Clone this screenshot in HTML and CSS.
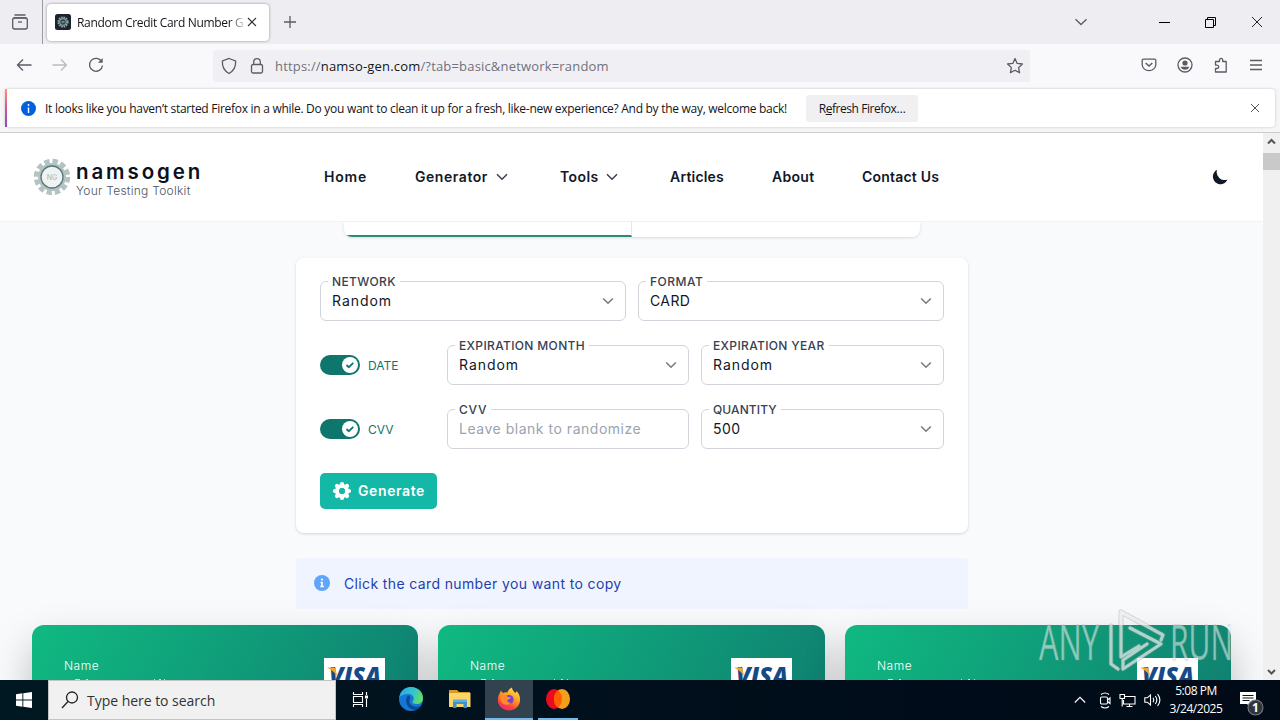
FILE: index.html
```html
<!DOCTYPE html>
<html lang="en">
<head>
<meta charset="utf-8">
<title>Random Credit Card Number Generator</title>
<link rel="stylesheet" href="styles.css">
</head>
<body>
<div class="desktop">
  <div class="titlebar">
    <div class="firefox-view"><svg width="18" height="18" viewBox="0 0 18 18" class="line"><path d="M3.5 2h11M2.5 4.8h13"/><rect x="1.7" y="5" width="14.6" height="11" rx="2"/><path d="M7 9h4"/></svg></div>
    <div class="tab">
      <svg width="16" height="16" viewBox="0 0 16 16"><rect width="16" height="16" rx="2.5" fill="#18242f"/><circle cx="8" cy="8" r="4.6" fill="none" stroke="#92a5a9" stroke-width="2" stroke-dasharray="1.6 .8"/><circle cx="8" cy="8" r="3.4" fill="#33454e" stroke="#b4c2c4" stroke-width=".8"/><path d="M6.5 8h3" stroke="#a9b9bc"/></svg>
      <span class="tab-title">Random Credit Card Number Ge</span>
      <svg class="tab-close" width="10" height="10" viewBox="0 0 10 10"><path d="M1 1l8 8M9 1L1 9" stroke="#333" stroke-width="1.1"/></svg>
    </div>
    <svg class="new-tab line" width="14" height="14" viewBox="0 0 14 14"><path d="M7 1v12M1 7h12"/></svg>
    <div class="window-buttons">
      <svg width="14" height="8" viewBox="0 0 14 8" class="line"><path d="M1.5 1.2L7 6.5l5.500-5.300"/></svg>
      <svg width="11" height="11" viewBox="0 0 11 11" stroke="#000" fill="none"><path d="M0 5.500h11"/></svg>
      <svg width="11" height="11" viewBox="0 0 11 11" stroke="#000" fill="none"><path d="M.5 2.500h8v8h-8zM2.500 2.500v-2h8v8h-2"/></svg>
      <svg width="12" height="12" viewBox="0 0 12 12" stroke="#222" fill="none"><path d="M1 1l10 10M11 1L1 11"/></svg>
    </div>
  </div>

  <div class="toolbar">
    <div class="history">
      <svg width="16" height="16" viewBox="0 0 16 16" class="line"><path d="M7 2.500L1.500 8 7 13.500M1.500 8h14"/></svg>
      <svg width="16" height="16" viewBox="0 0 16 16" class="line faded"><path d="M9 2.500L14.500 8 9 13.500M14.500 8H.5"/></svg>
      <svg width="16" height="16" viewBox="0 0 16 16" class="line"><path d="M13.700 4.600A6.500 6.500 0 1 0 14.500 8.500"/><path d="M14.700 1v4.800H9.900z" fill="#5b5b66" stroke="none"/></svg>
    </div>
    <div class="urlbar">
      <svg width="16" height="18" viewBox="0 0 16 18" class="line"><path d="M8 1.500L14.600 4c.4 5.500-1.600 9.600-6.600 12.500C3 13.600 1 9.500 1.400 4z"/></svg>
      <svg width="14" height="18" viewBox="0 0 14 18" class="line"><rect x="1.500" y="7.500" width="11" height="8.500" rx="1.500"/><path d="M3.700 7.500V5a3.300 3.300 0 0 1 6.600 0v2.500"/></svg>
      <span class="url">https://<b>namso-gen.com</b>/?tab=basic&amp;network=random</span>
      <svg width="18" height="18" viewBox="0 0 18 18" class="line"><path d="M9 1.600l2.200 4.800 5.200.6-3.800 3.600 1 5.200L9 13.200l-4.600 2.600 1-5.200L1.600 7l5.200-.6z" stroke-linejoin="round"/></svg>
    </div>
    <div class="tools">
      <svg width="16" height="16" viewBox="0 0 16 16" class="line"><path d="M2.500 2.200h11q1.300 0 1.300 1.300V7.500a6.800 6.200 0 0 1-13.600 0v-4q0-1.300 1.300-1.300z"/><path d="M4.700 6L8 9l3.300-3" stroke-width="1.500"/></svg>
      <svg width="16" height="16" viewBox="0 0 16 16" class="line"><circle cx="8" cy="8" r="7"/><circle cx="8" cy="6" r="2.600" fill="#5b5b66" stroke="none"/><path d="M3.700 9.700h8.600q-1 3-4.300 3t-4.300-3z" fill="#5b5b66" stroke="none"/></svg>
      <svg width="16" height="16" viewBox="0 0 16 16" class="line"><path d="M2.500 4.500h4V3a1.600 1.600 0 0 1 3.200 0v1.500h3.500v10.500H2.500v-3.500H4a1.700 1.700 0 0 0 0-3.400H2.500z" stroke-linejoin="round"/></svg>
      <svg width="14" height="16" viewBox="0 0 14 16" class="line"><path d="M1 3.500h12M1 8h12M1 12.500h12"/></svg>
    </div>
  </div>

  <div class="notice-area">
    <div class="notice">
      <svg width="15" height="15" viewBox="0 0 15 15"><circle cx="7.500" cy="7.500" r="7.500" fill="#0060df"/><path d="M7.500 3v2M7.500 6.500V12" stroke="#fff" stroke-width="1.400"/></svg>
      <span class="notice-text">It looks like you haven’t started Firefox in a while. Do you want to clean it up for a fresh, like-new experience? And by the way, welcome back!</span>
      <button class="refresh"><span>R<u>e</u>fresh Firefox…</span></button>
      <svg class="notice-close" width="10" height="10" viewBox="0 0 10 10"><path d="M1 1l8 8M9 1L1 9" stroke="#555" stroke-width="1"/></svg>
    </div>
  </div>

  <div class="viewport">
    <div class="page">
      <header class="site-header">
        <div class="brand">
          <svg width="38" height="38" viewBox="-19 -19 38 38">
            <circle r="15.800" fill="none" stroke="#b3c2c2" stroke-width="4.800" stroke-dasharray="5.300 2.973"/>
            <circle r="12.500" fill="#c5d0d0" stroke="#b3c2c2" stroke-width="3"/>
            <circle r="11" fill="#f0f3f3" stroke="#5c7779" stroke-width="1.300"/>
            <text class="logo-initials" y="2.500" text-anchor="middle">NG</text>
          </svg>
          <div class="brand-text"><strong>namsogen</strong><span>Your Testing Toolkit</span></div>
        </div>
        <nav class="nav">
          <a class="home">Home</a>
          <a class="generator">Generator<svg width="12" height="8" viewBox="0 0 12 8"><path d="M1 1.200l5 5 5-5"/></svg></a>
          <a class="toolkit">Tools<svg width="12" height="8" viewBox="0 0 12 8"><path d="M1 1.200l5 5 5-5"/></svg></a>
          <a class="articles">Articles</a>
          <a class="about">About</a>
          <a class="contact">Contact Us</a>
        </nav>
        <svg class="moon" width="16" height="16" viewBox="0 0 16 16"><path d="M5 .8A7.600 7.600 0 1 0 15.500 10.500 8 8 0 0 1 5 .8z" fill="#111827"/></svg>
      </header>

      <main class="content">
        <div class="tabs"><div class="tabs-active"></div></div>
        <form class="panel">
          <div class="row two">
            <div class="field"><label>NETWORK</label><span>Random</span><svg class="chev" width="12" height="8" viewBox="0 0 12 8"><path d="M1.200 1.500L6 6.200l4.800-4.700"/></svg></div>
            <div class="field"><label class="w-format">FORMAT</label><span class="v-card">CARD</span><svg class="chev" width="12" height="8" viewBox="0 0 12 8"><path d="M1.200 1.500L6 6.200l4.800-4.700"/></svg></div>
          </div>
          <div class="row three">
            <div class="switch"><i><svg width="10" height="10" viewBox="0 0 10 10"><path d="M1.500 5l2.300 2.200 4.500-4.400"/></svg></i><span>DATE</span></div>
            <div class="field"><label>EXPIRATION MONTH</label><span>Random</span><svg class="chev" width="12" height="8" viewBox="0 0 12 8"><path d="M1.200 1.500L6 6.200l4.800-4.700"/></svg></div>
            <div class="field"><label>EXPIRATION YEAR</label><span>Random</span><svg class="chev" width="12" height="8" viewBox="0 0 12 8"><path d="M1.200 1.500L6 6.200l4.800-4.700"/></svg></div>
          </div>
          <div class="row three">
            <div class="switch"><i><svg width="10" height="10" viewBox="0 0 10 10"><path d="M1.500 5l2.300 2.200 4.500-4.400"/></svg></i><span>CVV</span></div>
            <div class="field"><label class="w-cvv">CVV</label><span class="placeholder">Leave blank to randomize</span></div>
            <div class="field"><label class="w-qty">QUANTITY</label><span class="v-card">500</span><svg class="chev" width="12" height="8" viewBox="0 0 12 8"><path d="M1.200 1.500L6 6.200l4.800-4.700"/></svg></div>
          </div>
          <button class="generate" type="button">
            <svg width="20" height="20" viewBox="-10 -10 20 20"><circle r="5" fill="none" stroke="#fff" stroke-width="4"/><g stroke="#fff" stroke-width="4.200" stroke-linecap="round"><path d="M0-5v-2M0 5v2M-5 0h-2M5 0h2M3.600-3.600l1.400-1.400M3.600 3.600L5 5M-3.600 3.600L-5 5M-3.600-3.600L-5-5"/></g><circle r="3" fill="#14b8a6"/></svg>
            <span>Generate</span>
          </button>
        </form>
        <div class="alert">
          <svg width="16" height="16" viewBox="0 0 16 16"><circle cx="8" cy="8" r="8" fill="#60a5fa"/><circle cx="8" cy="4.500" r="1.100" fill="#fff"/><path d="M6.500 7.500H8V11M6.300 11.500h3.500" stroke="#fff" stroke-width="1.600" fill="none"/></svg>
          <span>Click the card number you want to copy</span>
        </div>
        <div class="cards">
          <div class="card"><div class="holder"><span>Name</span><svg width="110" height="2" viewBox="0 0 110 2"><path d="M11 .5h5M22 .5h2M90 .5h1M95 .5h2M100 .5h1"/></svg></div><div class="visa"><svg width="61" height="31" viewBox="0 0 61 31"><text x="5" y="27" textLength="52" lengthAdjust="spacingAndGlyphs">VISA</text><path d="M3 9.500h6.500q1.800 0 2.200 2l1.300 6.500Q9.500 12.500 3 9.500z" fill="#f0a52b"/></svg></div></div>
          <div class="card"><div class="holder"><span>Name</span><svg width="110" height="2" viewBox="0 0 110 2"><path d="M11 .5h5M22 .5h2M84 .5h1M91 .5h2M97 .5h1"/></svg></div><div class="visa"><svg width="61" height="31" viewBox="0 0 61 31"><text x="5" y="27" textLength="52" lengthAdjust="spacingAndGlyphs">VISA</text><path d="M3 9.500h6.500q1.800 0 2.200 2l1.300 6.500Q9.500 12.500 3 9.500z" fill="#f0a52b"/></svg></div></div>
          <div class="card"><div class="holder"><span>Name</span><svg width="110" height="2" viewBox="0 0 110 2"><path d="M11 .5h5M22 .5h2M84 .5h1M91 .5h2M97 .5h1"/></svg></div><div class="visa"><svg width="61" height="31" viewBox="0 0 61 31"><text x="5" y="27" textLength="52" lengthAdjust="spacingAndGlyphs">VISA</text><path d="M3 9.500h6.500q1.800 0 2.200 2l1.300 6.500Q9.500 12.500 3 9.500z" fill="#f0a52b"/></svg></div></div>
        </div>
      </main>
    </div>
    <div class="scrollbar">
      <svg width="17" height="20" viewBox="0 0 17 20"><path d="M5 10.500L8.500 7l3.500 3.500"/></svg>
      <div class="thumb"></div>
      <svg class="down" width="17" height="17" viewBox="0 0 17 17"><path d="M5 7l3.500 3.500L12 7"/></svg>
    </div>
  </div>

  <div class="taskbar">
    <div class="start"><svg width="16" height="16" viewBox="0 0 16 16"><path d="M0 2.200l6.400-.9v6.200H0zM7.300 1.200L16 0v7.500H7.300zM0 8.400h6.400v6.300L0 13.800zM7.300 8.400H16V16l-8.700-1.200z" fill="#fff"/></svg></div>
    <div class="search"><svg width="18" height="18" viewBox="0 0 18 18"><circle cx="11" cy="6.500" r="5.500"/><path d="M7 10.500L1 17"/></svg><span>Type here to search</span></div>
    <div class="app task-view"><svg width="17" height="17" viewBox="0 0 17 17" fill="none" stroke="#fff" stroke-width="1.100"><path d="M1.500 1v2.500h9V1M1.500 16v-2.500h9V16M1.500 5.500h9v6h-9zM14.500 1v3M14.500 8v8"/><path d="M13 4.500h3v3h-3z" fill="#fff" stroke="none"/></svg></div>
    <div class="app"><svg width="24" height="24" viewBox="0 0 24 24">
      <defs><linearGradient id="edge-top" x1="0" x2="1" y1=".2" y2=".5"><stop offset="0" stop-color="#2aa8e8"/><stop offset=".6" stop-color="#36c6c8"/><stop offset="1" stop-color="#63de62"/></linearGradient></defs>
      <circle cx="12" cy="12" r="12" fill="#1477d4"/><path d="M.3 10.500C1.500 4 6 0 12 0c7 0 12 5.200 12 11 0 4-3 6-6.300 6-3 0-4.300-1-4.300-2s1.300-1.500 1.300-3.500c0-2.500-2.200-4.500-5.700-4.500-4 0-7 1.500-8.700 3.500z" fill="url(#edge-top)"/><path d="M9 8.500c-2 2-2.600 5-1.400 8.200C9 20.500 12.500 23 17 22.800c2-.9 3.800-2.300 5-4.300-3 1.700-6.400 1.600-8.800.2-2.500-1.500-3.500-4-2.400-6.700C11.500 10 11 8.800 9 8.500z" fill="#0c4a94"/></svg></div>
    <div class="app"><svg width="22" height="20" viewBox="0 0 22 20"><path d="M0 1h8l2 2h11v4H0z" fill="#d99a27"/><path d="M0 4h21.500v14H0z" fill="#fbd568"/><path d="M4 11h14v8h-3.500v-4h-7v4H4z" fill="#3d91cc"/><path d="M4 10.500h14V13H4z" fill="#5bb0dc"/></svg></div>
    <div class="app active"><svg width="24" height="24" viewBox="0 0 24 24">
      <defs><linearGradient id="fox" x1=".8" x2=".3" y1="0" y2="1"><stop offset="0" stop-color="#ffe84a"/><stop offset=".45" stop-color="#ff9a20"/><stop offset=".8" stop-color="#fb4041"/><stop offset="1" stop-color="#e9247d"/></linearGradient></defs>
      <path d="M4 3.500c.4 1.300 1.200 2 2.200 2.500C8 5 9 5 10.500 5.500 11 3.500 12.500 1.500 15 .5c0 2 1 3 3 5.500 1-.5 1.500-1 1.500-2C22 6.500 23.500 10 23 14c-.7 5.500-5.300 9.500-11 9.500S.8 19 .8 13.300C.8 9 2.500 7 4 3.500z" fill="url(#fox)"/><circle cx="12" cy="12.500" r="4.600" fill="#7542d9"/><path d="M3.500 8c3-1.500 6 0 7.300 2 2 0 3 .4 3 1-1 1.300-3 1-3.500 2.500 0 1.700 2 2.700 4 1.800-3 4.500-10 2.500-10.800-3.300z" fill="#ff8c2a"/></svg></div>
    <div class="app running"><svg width="24" height="22" viewBox="0 0 24 22"><ellipse cx="8" cy="11" rx="8" ry="10" fill="#eb0a1e"/><ellipse cx="16" cy="11" rx="8" ry="10" fill="#f79e1b"/><path d="M12 2.300c5.300 4.400 5.300 13 0 17.400-5.300-4.400-5.300-13 0-17.400z" fill="#ff5f00"/></svg></div>
    <div class="tray">
      <svg width="12" height="8" viewBox="0 0 12 8"><path d="M.8 6.500L6 1.300l5.200 5.200"/></svg>
      <svg width="12" height="17" viewBox="0 0 12 17"><rect x="1.500" y="5" width="7" height="7" rx="1.200"/><path d="M8.500 8l2.500-2v5.500l-2.500-2M2 2.500q4-3 8 0M2 14.500q4 3 8 0"/></svg>
      <svg width="17" height="15" viewBox="0 0 17 15"><path d="M6 3.500h10v7.500H4.500V7M1 1.500h4.500v4H1zM3.200 5.500v8M7.500 13.500h6M10.500 11v2.500"/></svg>
      <svg width="17" height="14" viewBox="0 0 17 14"><path d="M.8 4.800h2.500L6.500 2v10L3.300 9.200H.8zM9 4.800q1.500 2.200 0 4.400M11.300 3q3 4 0 8M13.600 1.200q4.600 5.800 0 11.600"/></svg>
      <div class="clock"><span>5:08 PM</span><span>3/24/2025</span></div>
      <svg class="action" width="25" height="26" viewBox="0 0 25 26"><path d="M1 2h16v12h-5v4l-4-4H1z" fill="#fff" stroke="none"/><path d="M3.500 5.500h11M3.500 8h11M3.500 10.500h7" stroke="#07111d"/><circle cx="16.500" cy="17.500" r="7.500" fill="#30353c" stroke="#777b80"/><text x="16.500" y="22" text-anchor="middle">1</text></svg>
    </div>
  </div>

  <svg class="watermark" width="198" height="66" viewBox="0 0 198 66">
    <text x="2" y="52" textLength="60" lengthAdjust="spacingAndGlyphs">ANY</text>
    <text x="133" y="52" textLength="63" lengthAdjust="spacingAndGlyphs">RUN</text>
    <g fill="none" stroke-linejoin="round" stroke-linecap="round">
      <path d="M74 18v38l7 5M84 4v45l18-11M84 4l42 23-2 5M93 20l31 16-38 25V52l24-16" stroke="#8b9698" stroke-width="5" opacity=".35"/>
      <path d="M74 18v38l7 5M84 4v45l18-11M84 4l42 23-2 5M93 20l31 16-38 25V52l24-16" stroke="#fff" stroke-width="3.200" opacity=".6"/>
    </g>
  </svg>
</div>
</body>
</html>
```
FILE: styles.css
```css
* { box-sizing: border-box; }
body { margin: 0; overflow: hidden; font-family: "Open Sans", "Noto Sans", sans-serif; }
svg { display: block; flex: none; }
button { border: 0; padding: 0; font: inherit; }
.desktop { position: relative; width: 1280px; height: 720px; display: flex; flex-direction: column; background: #fff; }
.line { fill: none; stroke: #5b5b66; stroke-width: 1.3; }
.faded { opacity: .4; }

/* browser window */
.titlebar { height: 44px; flex: none; display: flex; align-items: center; background: #eeeef2; }
.firefox-view { width: 43px; height: 44px; padding: 13px 0 0 11px; border-right: 1px solid #9b9ba3; }
.tab { width: 222px; height: 37px; margin-left: 4px; padding: 0 11px 0 8px; display: flex; align-items: center; border-radius: 4px; background: #fff; box-shadow: 0 0 3px rgba(0,0,0,.4); }
.tab-title { width: 166px; margin-left: 6px; overflow: hidden; white-space: nowrap; font-size: 12px; letter-spacing: -.32px; color: #15141a; -webkit-mask-image: linear-gradient(90deg,#000 92%,transparent 102%); mask-image: linear-gradient(90deg,#000 92%,transparent 102%); }
.tab-close { margin-left: 4px; }
.new-tab { margin-left: 14px; }
.window-buttons { margin-left: auto; margin-right: 17px; display: flex; align-items: center; }
.window-buttons svg:nth-child(2) { margin-left: 71px; }
.window-buttons svg:nth-child(3) { margin-left: 35px; }
.window-buttons svg:nth-child(4) { margin-left: 35px; }
.toolbar { height: 44px; flex: none; display: flex; align-items: center; padding: 0 16px 4px; background: #f9f9fb; }
.history { width: 197px; display: flex; gap: 20px; padding-top: 2px; }
.urlbar { width: 817px; height: 32px; margin-top: 4px; padding: 0 6px 0 8px; display: flex; align-items: center; background: #f0f0f4; border-radius: 2px; }
.urlbar svg:nth-child(2) { margin-left: 13px; }
.url { flex: 1; margin-left: 11px; padding-bottom: 1px; font-size: 13px; letter-spacing: .18px; color: #71717a; }
.url b { font-weight: 400; color: #15141a; }
.tools { margin-left: auto; display: flex; gap: 20px; padding-top: 1px; padding-right: 1px; }
.notice-area { height: 45px; flex: none; padding: 1px 5px 0 5px; background: #f6f6f7; border-bottom: 1px solid #ccc; }
.notice { height: 38px; padding: 0 15px 0 14px; display: flex; align-items: center; background: #fff; border-left: 2px solid; border-image: linear-gradient(#ff9b62,#d451a0,#8050c8) 1; border-radius: 4px; box-shadow: 0 0 3px rgba(0,0,0,.2); }
.notice-text { width: 744px; margin-left: 9px; white-space: nowrap; font-size: 12px; letter-spacing: -.283px; color: #15141a; }
.refresh { width: 112px; height: 27px; margin-left: 17px; border-radius: 3px; background: #f0f0f3; font-size: 12px; letter-spacing: -.45px; color: #15141a; }
.notice-close { margin-left: auto; }

/* web page */
.viewport { height: 547px; flex: none; display: flex; overflow: hidden; }
.page { width: 1263px; background: #f8fafc; font-family: Inter, "Open Sans", sans-serif; }
.scrollbar { width: 17px; display: flex; flex-direction: column; background: #f0f0f0; }
.scrollbar path { fill: none; stroke: #555; stroke-width: 2; }
.scrollbar .down { margin-top: auto; }
.thumb { width: 17px; height: 17px; background: #c9c9c9; }
.site-header { height: 89px; display: flex; align-items: center; padding: 0 35px 0 33px; background: #fff; border-bottom: 1px solid #f1f3f5; }
.brand { width: 291px; display: flex; align-items: center; gap: 5px; }
.brand-text { display: flex; flex-direction: column; padding-top: 3px; }
.brand-text strong { font-size: 20.5px; line-height: 23px; font-weight: 600; letter-spacing: 2.9px; color: #0b1120; }
.brand-text span { font-size: 12px; line-height: 15px; font-weight: 300; letter-spacing: .26px; color: #4b5563; }
.logo-initials { font-size: 7px; fill: #a7b7b7; }
.nav { display: flex; align-items: center; padding-bottom: 1px; font-size: 14px; font-weight: 600; color: #111827; }
.nav a { display: flex; align-items: center; justify-content: space-between; white-space: nowrap; }
.nav svg path { fill: none; stroke: #374151; stroke-width: 1.5; }
.nav .home { width: 43px; letter-spacing: .8px; }
.nav .generator { width: 93px; margin-left: 48px; letter-spacing: .55px; }
.nav .toolkit { width: 58px; margin-left: 52px; letter-spacing: .4px; }
.nav .articles { width: 54px; margin-left: 52px; letter-spacing: .2px; }
.nav .about { width: 42px; margin-left: 48px; letter-spacing: .3px; }
.nav .contact { width: 77px; margin-left: 48px; letter-spacing: .2px; }
.moon { margin-left: auto; }
.content { padding: 0 32px; }
.tabs { width: 576px; height: 15px; margin-left: 312px; background: #fff; border-radius: 0 0 8px 8px; box-shadow: 0 1px 3px rgba(0,0,0,.12); overflow: hidden; }
.tabs-active { width: 288px; height: 15px; border-right: 1px solid #e5e7eb; border-bottom: 2px solid #2b8a75; }
.panel { width: 672px; height: 275px; margin: 21px 0 0 264px; padding: 23px 24px; background: #fff; border-radius: 8px; box-shadow: 0 1px 3px rgba(0,0,0,.15); }
.row { display: grid; column-gap: 12px; margin-bottom: 24px; }
.two { grid-template-columns: 1fr 1fr; }
.three { grid-template-columns: 115px 242px 243px; }
.field { position: relative; height: 40px; padding: 0 11px 1px; display: flex; align-items: center; justify-content: space-between; border: 1px solid #d1d5db; border-radius: 6px; font-size: 14px; letter-spacing: .95px; color: #0f172a; }
.field label { position: absolute; left: 7px; top: -8px; padding: 0 4px; background: #fff; font-size: 12px; line-height: 16px; font-weight: 500; letter-spacing: .35px; white-space: nowrap; color: #374151; }
.field .w-format { letter-spacing: .5px; }
.field .w-cvv { letter-spacing: .8px; }
.field .w-qty { letter-spacing: .1px; }
.field .v-card { letter-spacing: .4px; }
.field .placeholder { color: #9ca3af; letter-spacing: .52px; }
.chev { margin-top: 1px; }
.chev path { fill: none; stroke: #777b80; stroke-width: 1.6; }
.switch { display: flex; align-items: center; gap: 8px; font-size: 12px; color: #0f766e; }
.switch i { width: 40px; height: 20px; padding: 2px; display: flex; justify-content: flex-end; border-radius: 10px; background: #0f766e; }
.switch svg { width: 16px; height: 16px; padding: 3px; border-radius: 50%; background: #fff; }
.switch path { fill: none; stroke: #0f766e; stroke-width: 1.8; }
.generate { width: 117px; height: 36px; padding: 0 0 1px 12px; display: flex; align-items: center; gap: 6px; border-radius: 5px; background: #14b8a6; color: #fff; font-size: 14px; font-weight: 600; letter-spacing: .6px; }
.alert { width: 672px; height: 51px; margin: 25px 0 0 264px; padding: 0 0 1px 18px; display: flex; align-items: center; gap: 14px; background: #eff4fe; color: #1e40af; font-size: 14px; letter-spacing: .37px; border-radius: 2px; }
.cards { margin-top: 16px; display: grid; grid-template-columns: 386px 387px 386px; gap: 20px; }
.card { height: 220px; padding: 32px 33px 0 32px; display: flex; justify-content: space-between; align-items: flex-start; border-radius: 12px; background: linear-gradient(120deg,#10b981,#0f766e); color: #fff; box-shadow: 0 20px 40px rgba(0,0,0,.25); }
.holder span { display: block; height: 22px; line-height: 18px; font-size: 12px; font-weight: 300; letter-spacing: .5px; }
.holder path { stroke: #b5e6d2; stroke-width: 1; }
.visa { width: 61px; height: 40px; margin-top: 1px; background: #fff; }
.visa text { font: italic 800 24px "Open Sans", sans-serif; fill: #164a87; }

/* Windows taskbar */
.taskbar { height: 40px; flex: none; display: flex; background: linear-gradient(90deg,#001821,#000d1a 65%,#000b17); color: #fff; }
.start { width: 48px; display: flex; align-items: center; justify-content: center; }
.search { width: 288px; padding-left: 12px; display: flex; align-items: center; gap: 8px; background: #f1f1f1; border: 1px solid #c4c4c4; color: #333; font-size: 14px; letter-spacing: -.03px; }
.search svg { fill: none; stroke: #222; stroke-width: 1.3; }
.app { width: 48px; margin-right: 1px; display: flex; align-items: center; justify-content: center; border-bottom: 2px solid transparent; }
.task-view { margin-right: 3px; }
.active { background: #33424f; border-color: #76b9ed; }
.running { width: 40px; margin-left: 4px; border-color: #76b9ed; }
.tray { margin-left: auto; padding-right: 16px; display: flex; align-items: center; gap: 8px; }
.tray svg { fill: none; stroke: #fff; stroke-width: 1.1; }
.tray svg:first-child { margin-right: 5px; }
.clock { width: 54px; display: flex; flex-direction: column; align-items: center; font-size: 12px; line-height: 18px; letter-spacing: -.45px; white-space: nowrap; }
.tray .action { margin: 5px 0 0 8px; }
.action text { font-size: 12px; font-weight: 700; fill: #fff; stroke: none; }
.watermark { position: absolute; left: 1037px; top: 608px; }
.watermark text { font: 400 49px "Open Sans", sans-serif; fill: #fff; fill-opacity: .5; stroke: #8b9698; stroke-opacity: .4; stroke-width: .8; }
```
